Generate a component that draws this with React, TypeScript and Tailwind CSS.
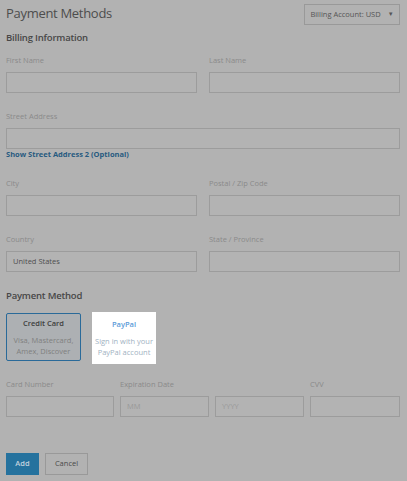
import React from "react";

const font = { fontFamily: '"Open Sans", "Noto Sans", sans-serif' };

function Label({ children }: { children: React.ReactNode }) {
  return <div className="h-[12px] text-[7.5px] leading-[12px] text-[#8a8a8a]">{children}</div>;
}

function Input({ value, placeholder, className = "" }: { value?: string; placeholder?: string; className?: string }) {
  return (
    <div className={"mt-[6px] flex h-[21px] items-center border border-[#9c9c9c] bg-[#b3b3b3] px-[6px] text-[7.5px] " + className}>
      {value ? <span className="text-[#4f4f4f]">{value}</span> : <span className="text-[#999999]">{placeholder}</span>}
    </div>
  );
}

export default function App() {
  return (
    <div className="h-[481px] w-[407px] overflow-hidden bg-[#b2b2b2] pl-[6px] pr-[7px]" style={font}>
      <div className="flex items-start justify-between pt-[4px]">
        <div className="mt-[-1px] text-[13px] leading-[20px] tracking-[-0.3px] text-[#4d4d4d]">Payment Methods</div>
        <div className="flex h-[21px] w-[96px] items-center justify-center gap-[7px] border border-[#999999] text-[7.5px] text-[#555555]">
          <span>Billing Account: USD</span>
          <span className="text-[6px] text-[#555555]">▼</span>
        </div>
      </div>

      <div className="mt-[6px] text-[9.5px] font-semibold leading-[14px] tracking-[-0.2px] text-[#474747]">Billing Information</div>

      <div className="mt-[9px] grid grid-cols-2 gap-x-[12px]">
        <div>
          <Label>First Name</Label>
          <Input />
        </div>
        <div>
          <Label>Last Name</Label>
          <Input />
        </div>
      </div>

      <div className="mt-[17px]">
        <Label>Street Address</Label>
        <Input />
      </div>
      <div className="h-[10px] text-[7.5px] font-bold leading-[10px] text-[#275a80]">Show Street Address 2 (Optional)</div>

      <div className="mt-[18px] grid grid-cols-2 gap-x-[12px]">
        <div>
          <Label>City</Label>
          <Input />
        </div>
        <div>
          <Label>Postal / Zip Code</Label>
          <Input />
        </div>
      </div>

      <div className="mt-[17px] grid grid-cols-2 gap-x-[12px]">
        <div>
          <Label>Country</Label>
          <Input value="United States" />
        </div>
        <div>
          <Label>State / Province</Label>
          <Input />
        </div>
      </div>

      <div className="mt-[16px] text-[9.5px] font-semibold leading-[16px] tracking-[-0.2px] text-[#474747]">Payment Method</div>

      <div className="mt-[9px] flex items-start">
        <div className="flex h-[48px] w-[75px] flex-col items-center justify-center rounded-[2px] border border-[#2a6a99] bg-[#adb0b3] text-center">
          <div className="text-[7.5px] font-semibold leading-[11px] text-[#3d3d3d]">Credit Card</div>
          <div className="mt-[6px] text-[7.5px] leading-[11px] text-[#808080]">
            Visa, Mastercard,
            <br />
            Amex, Discover
          </div>
        </div>
        <div className="ml-[11px] mt-[-1px] flex h-[52px] w-[64px] flex-col items-center justify-center bg-white text-center">
          <div className="text-[7.5px] font-semibold leading-[11px] text-[#5b9bd8]">PayPal</div>
          <div className="mt-[6px] text-[7.5px] leading-[11px] text-[#9fb2c2]">
            Sign in with your
            <br />
            PayPal account
          </div>
        </div>
      </div>

      <div className="mt-[14px] grid grid-cols-[108px_89px_89px_1fr] gap-x-[6px]">
        <div>
          <Label>Card Number</Label>
          <Input />
        </div>
        <div>
          <Label>Expiration Date</Label>
          <Input placeholder="MM" />
        </div>
        <div>
          <Label>&nbsp;</Label>
          <Input placeholder="YYYY" />
        </div>
        <div>
          <Label>CVV</Label>
          <Input />
        </div>
      </div>

      <div className="mt-[36px] flex gap-[6px]">
        <div className="flex h-[22px] w-[33px] items-center justify-center bg-[#25729e] text-[7.5px] font-semibold text-[#c3d3de]">
          Add
        </div>
        <div className="flex h-[22px] w-[43px] items-center justify-center border border-[#999999] text-[7.5px] text-[#4a4a4a]">
          Cancel
        </div>
      </div>
    </div>
  );
}
